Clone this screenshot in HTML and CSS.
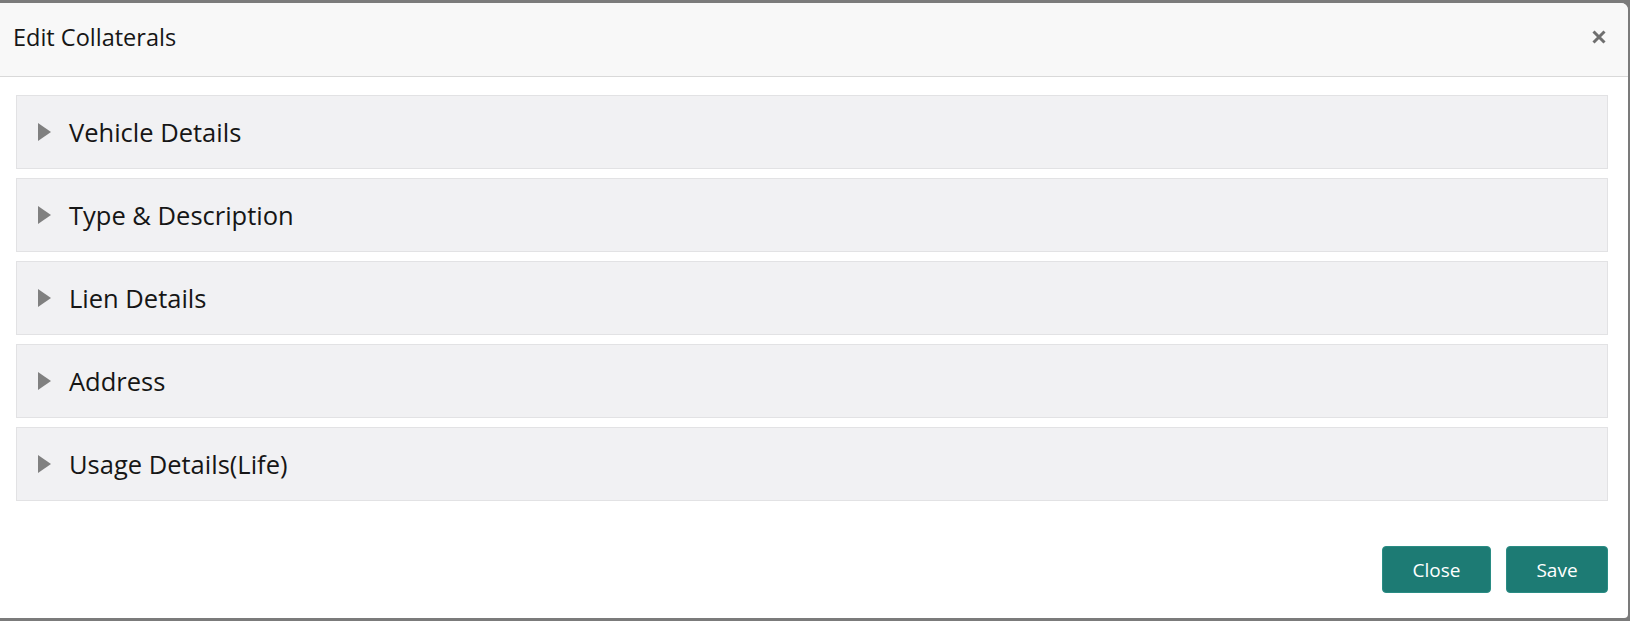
FILE: index.html
```html
<html>

<head>
  <link rel="stylesheet" href="styles.css">
</head>

<body>
  <div class="modal">
    <div class="modal-header">
      <div class="modal-title">Edit Collaterals</div>
      <div class="modal-close">
        <svg viewBox="0 0 14 14" width="14" height="14">
          <path d="M1.5 1.5L12.5 12.5M12.5 1.5L1.5 12.5" stroke="#6f6f6f" stroke-width="3" fill="none"></path>
        </svg>
      </div>
    </div>
    <div class="modal-body">
      <div class="panel"><span class="panel-arrow"></span><span class="panel-title">Vehicle Details</span></div>
      <div class="panel"><span class="panel-arrow"></span><span class="panel-title">Type &amp; Description</span></div>
      <div class="panel"><span class="panel-arrow"></span><span class="panel-title">Lien Details</span></div>
      <div class="panel"><span class="panel-arrow"></span><span class="panel-title">Address</span></div>
      <div class="panel"><span class="panel-arrow"></span><span class="panel-title">Usage Details(Life)</span></div>
    </div>
    <div class="modal-footer">
      <button class="btn btn-close">Close</button>
      <button class="btn btn-save">Save</button>
    </div>
  </div>
</body>

</html>
```

FILE: styles.css
```css
* {
  margin: 0;
  padding: 0;
  box-sizing: border-box;
}

body {
  background-color: #7b7b7b;
  height: 100vh;
  overflow: hidden;
  font-family: "Open Sans", "Noto Sans", sans-serif;
  color: #161616;
}

.modal {
  margin-top: 3px;
  width: 1628px;
  height: 615px;
  background-color: #fff;
  border-radius: 0 7px 4px 0;
  overflow: hidden;
  display: flex;
  flex-direction: column;
}

.modal-header {
  height: 74px;
  flex: none;
  background-color: #f8f8f8;
  border-bottom: 1px solid #d9d9d9;
  display: flex;
  align-items: center;
  justify-content: space-between;
  padding: 0 22px 5px 13px;
}

.modal-title {
  font-size: 23.5px;
}

.modal-close {
  width: 14px;
  height: 14px;
  display: flex;
}

.modal-body {
  display: flex;
  flex-direction: column;
  gap: 9px;
  padding: 18px 20px 0 16px;
}

.panel {
  height: 74px;
  background-color: #f1f1f3;
  border: 1px solid #e2e2e4;
  display: flex;
  align-items: center;
  padding-left: 21px;
}

.panel-arrow {
  width: 0;
  height: 0;
  border-left: 13px solid #808080;
  border-top: 9px solid transparent;
  border-bottom: 9px solid transparent;
  margin-right: 18px;
}

.panel-title {
  font-size: 25.5px;
}

.modal-footer {
  margin-top: auto;
  display: flex;
  justify-content: flex-end;
  gap: 15px;
  padding: 0 20px 25px 0;
}

.btn {
  height: 47px;
  border: 1px solid #2a8c84;
  border-radius: 4px;
  background-color: #1d7b74;
  color: #fff;
  font-family: "Open Sans", "Noto Sans", sans-serif;
  font-size: 19px;
}

.btn-close {
  width: 109px;
}

.btn-save {
  width: 102px;
}
```
